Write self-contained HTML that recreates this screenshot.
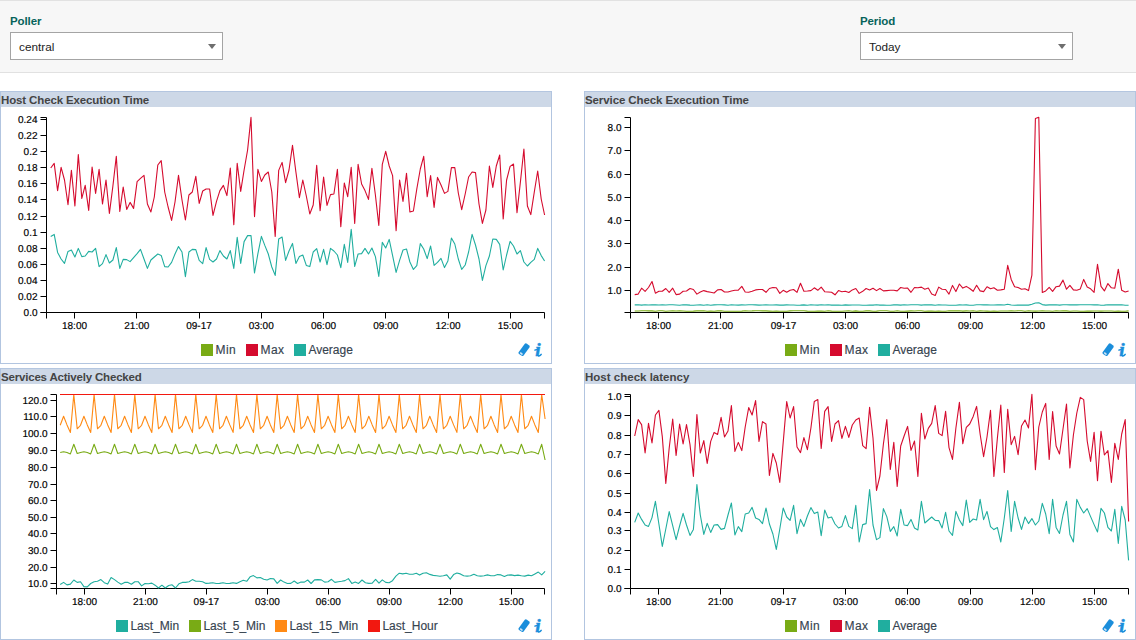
<!DOCTYPE html><html><head><meta charset="utf-8"><title>Poller statistics</title><style>
html,body{margin:0;padding:0;background:#fff;width:1136px;height:640px;overflow:hidden}
body{font-family:"Liberation Sans",sans-serif;position:relative}
.top{position:absolute;left:0;top:0;width:1136px;height:72px;background:#f7f7f7;border-top:1px solid #e2e2e2;border-bottom:1px solid #e1e1e1;box-sizing:content-box;height:71px}
.lbl{position:absolute;font-weight:bold;font-size:11.5px;color:#07635b;line-height:14px;letter-spacing:-0.1px}
.sel{position:absolute;width:211px;height:26px;background:#fff;border:1px solid #a4a4a4;font-size:11.8px;color:#222;line-height:29px;text-indent:8px}
.sel:after{content:"";position:absolute;right:6px;top:11px;border-left:4px solid transparent;border-right:4px solid transparent;border-top:5px solid #6e6e6e}
.panel{position:absolute;border:1px solid #b2c5e0;border-top:none;background:#fff;box-sizing:content-box}
.hd{height:16px;background:#cdd8e7;color:#444;font-weight:bold;font-size:11.5px;line-height:17px;padding-left:0px;white-space:nowrap;border-top:1px solid #b4c6e0;box-sizing:border-box}
svg{display:block}
.ax{fill:none;stroke:#000;stroke-width:1}
.tk{font-size:10px;text-rendering:geometricPrecision;stroke:#000;stroke-width:0.18px;fill:#000;font-family:"Liberation Sans",sans-serif}
.lg{font-size:12px;fill:#36434f;stroke:#36434f;stroke-width:0.15px;font-family:"Liberation Sans",sans-serif}
.ln{fill:none;stroke-width:1.1;stroke-linejoin:round}
.ii{font-family:"Liberation Serif",serif;font-style:italic;font-weight:bold;font-size:19.5px;fill:#1b8edb;stroke:#1b8edb;stroke-width:0.45px}
</style></head><body><div class="top"></div><div class="lbl" style="left:10px;top:14px">Poller</div><div class="sel" style="left:10px;top:32px">central</div><div class="lbl" style="left:860px;top:14px">Period</div><div class="sel" style="left:860px;top:32px">Today</div><div class="panel" style="left:0px;top:91px;width:550px;height:272px"><div class="hd" style="letter-spacing:-0.13px">Host Check Execution Time</div><svg width="550" height="256" viewBox="0 0 550 256"><path d="M39.5,10.5H45.5V205.5H39.5" class="ax"/><line x1="39.5" x2="45.5" y1="205.5" y2="205.5" class="ax"/><text x="36.5" y="208.8" text-anchor="end" class="tk">0.0</text><line x1="39.5" x2="45.5" y1="189.5" y2="189.5" class="ax"/><text x="36.5" y="192.8" text-anchor="end" class="tk">0.02</text><line x1="39.5" x2="45.5" y1="173.5" y2="173.5" class="ax"/><text x="36.5" y="176.8" text-anchor="end" class="tk">0.04</text><line x1="39.5" x2="45.5" y1="157.5" y2="157.5" class="ax"/><text x="36.5" y="160.8" text-anchor="end" class="tk">0.06</text><line x1="39.5" x2="45.5" y1="141.5" y2="141.5" class="ax"/><text x="36.5" y="144.8" text-anchor="end" class="tk">0.08</text><line x1="39.5" x2="45.5" y1="125.5" y2="125.5" class="ax"/><text x="36.5" y="128.8" text-anchor="end" class="tk">0.1</text><line x1="39.5" x2="45.5" y1="109.5" y2="109.5" class="ax"/><text x="36.5" y="112.8" text-anchor="end" class="tk">0.12</text><line x1="39.5" x2="45.5" y1="92.5" y2="92.5" class="ax"/><text x="36.5" y="95.8" text-anchor="end" class="tk">0.14</text><line x1="39.5" x2="45.5" y1="76.5" y2="76.5" class="ax"/><text x="36.5" y="79.8" text-anchor="end" class="tk">0.16</text><line x1="39.5" x2="45.5" y1="60.5" y2="60.5" class="ax"/><text x="36.5" y="63.8" text-anchor="end" class="tk">0.18</text><line x1="39.5" x2="45.5" y1="44.5" y2="44.5" class="ax"/><text x="36.5" y="47.8" text-anchor="end" class="tk">0.2</text><line x1="39.5" x2="45.5" y1="28.5" y2="28.5" class="ax"/><text x="36.5" y="31.8" text-anchor="end" class="tk">0.22</text><line x1="39.5" x2="45.5" y1="12.5" y2="12.5" class="ax"/><text x="36.5" y="15.8" text-anchor="end" class="tk">0.24</text><path d="M45.5,211.5V205.5H543.5V211.5" class="ax"/><line x1="73.5" x2="73.5" y1="205.5" y2="211.5" class="ax"/><text x="73.5" y="222.0" text-anchor="middle" class="tk">18:00</text><line x1="135.5" x2="135.5" y1="205.5" y2="211.5" class="ax"/><text x="135.8" y="222.0" text-anchor="middle" class="tk">21:00</text><line x1="198.5" x2="198.5" y1="205.5" y2="211.5" class="ax"/><text x="198.0" y="222.0" text-anchor="middle" class="tk">09-17</text><line x1="260.5" x2="260.5" y1="205.5" y2="211.5" class="ax"/><text x="260.2" y="222.0" text-anchor="middle" class="tk">03:00</text><line x1="322.5" x2="322.5" y1="205.5" y2="211.5" class="ax"/><text x="322.5" y="222.0" text-anchor="middle" class="tk">06:00</text><line x1="384.5" x2="384.5" y1="205.5" y2="211.5" class="ax"/><text x="384.8" y="222.0" text-anchor="middle" class="tk">09:00</text><line x1="447.5" x2="447.5" y1="205.5" y2="211.5" class="ax"/><text x="447.0" y="222.0" text-anchor="middle" class="tk">12:00</text><line x1="509.5" x2="509.5" y1="205.5" y2="211.5" class="ax"/><text x="509.2" y="222.0" text-anchor="middle" class="tk">15:00</text><path d="M49.7,61.0 L53.2,56.4 L56.6,83.6 L60.1,60.4 L63.5,73.0 L67.0,97.6 L70.4,63.4 L73.9,99.0 L77.3,47.6 L80.8,91.4 L84.2,78.4 L87.7,103.4 L91.1,60.0 L94.6,86.4 L98.1,62.4 L101.5,97.0 L105.0,73.0 L108.4,106.4 L111.9,79.0 L115.3,49.4 L118.8,104.4 L122.2,80.0 L125.7,102.4 L129.1,95.4 L132.6,101.4 L136.1,74.6 L139.5,71.4 L143.0,68.4 L146.4,97.0 L149.9,105.0 L153.3,90.0 L156.8,58.0 L160.2,53.6 L163.7,85.0 L167.1,100.0 L170.6,113.4 L174.0,95.0 L177.5,68.4 L181.0,93.0 L184.4,113.0 L187.9,88.0 L191.3,85.0 L194.8,69.4 L198.2,96.4 L201.7,84.0 L205.1,82.0 L208.6,82.0 L212.0,108.4 L215.5,94.4 L218.9,83.6 L222.4,78.4 L225.9,88.6 L229.3,61.0 L232.8,117.6 L236.2,56.4 L239.7,84.4 L243.1,63.0 L246.6,43.0 L250.0,10.4 L253.5,109.6 L256.9,62.4 L260.4,74.4 L263.8,68.0 L267.3,65.0 L270.8,85.0 L274.2,129.4 L277.7,63.4 L281.1,55.4 L284.6,75.6 L288.0,63.0 L291.5,38.4 L294.9,65.0 L298.4,90.6 L301.8,73.0 L305.3,89.0 L308.8,107.0 L312.2,98.0 L315.7,58.4 L319.1,103.6 L322.6,70.0 L326.0,98.4 L329.5,87.6 L332.9,87.0 L336.4,62.4 L339.8,119.6 L343.3,76.0 L346.7,89.6 L350.2,60.4 L353.7,116.4 L357.1,57.4 L360.6,77.0 L364.0,83.6 L367.5,92.4 L370.9,61.4 L374.4,88.0 L377.8,118.4 L381.3,57.4 L384.7,44.4 L388.2,59.0 L391.6,68.6 L395.1,123.6 L398.6,73.0 L402.0,94.4 L405.5,66.4 L408.9,105.0 L412.4,104.0 L415.8,82.0 L419.3,62.0 L422.7,49.4 L426.2,89.6 L429.6,68.6 L433.1,100.4 L436.5,70.4 L440.0,78.0 L443.5,86.4 L446.9,84.4 L450.4,60.6 L453.8,60.6 L457.3,86.0 L460.7,102.6 L464.2,87.0 L467.6,70.0 L471.1,65.0 L474.5,65.6 L478.0,97.0 L481.4,116.4 L484.9,103.0 L488.4,59.0 L491.8,80.4 L495.3,59.0 L498.7,48.0 L502.2,112.0 L505.6,73.0 L509.1,59.4 L512.5,57.0 L516.0,105.6 L519.4,75.0 L522.9,42.0 L526.4,99.0 L529.8,107.6 L533.3,85.0 L536.7,64.0 L540.2,92.0 L543.6,108.0" class="ln" stroke="#d50b2e"/><path d="M49.7,129.4 L53.2,127.4 L56.6,145.4 L60.1,152.0 L63.5,156.4 L67.0,144.4 L70.4,143.0 L73.9,150.0 L77.3,141.4 L80.8,149.6 L84.2,149.0 L87.7,144.4 L91.1,145.0 L94.6,141.4 L98.1,159.6 L101.5,156.6 L105.0,147.6 L108.4,156.0 L111.9,153.0 L115.3,140.6 L118.8,161.4 L122.2,152.4 L125.7,152.6 L129.1,154.6 L132.6,150.6 L136.1,146.6 L139.5,142.4 L143.0,152.0 L146.4,161.4 L149.9,153.0 L153.3,150.0 L156.8,147.0 L160.2,148.4 L163.7,159.6 L167.1,160.0 L170.6,155.4 L174.0,147.0 L177.5,139.6 L181.0,145.0 L184.4,169.6 L187.9,145.0 L191.3,142.4 L194.8,142.6 L198.2,153.4 L201.7,156.6 L205.1,140.6 L208.6,152.4 L212.0,155.0 L215.5,152.0 L218.9,143.6 L222.4,149.0 L225.9,152.0 L229.3,143.6 L232.8,161.4 L236.2,130.4 L239.7,156.4 L243.1,134.6 L246.6,128.6 L250.0,128.6 L253.5,166.0 L256.9,146.6 L260.4,129.4 L263.8,138.4 L267.3,147.0 L270.8,160.0 L274.2,168.4 L277.7,132.0 L281.1,130.0 L284.6,153.4 L288.0,144.0 L291.5,136.4 L294.9,156.4 L298.4,149.6 L301.8,148.0 L305.3,158.4 L308.8,159.6 L312.2,145.0 L315.7,141.6 L319.1,155.0 L322.6,142.4 L326.0,157.6 L329.5,141.4 L332.9,144.0 L336.4,148.0 L339.8,160.6 L343.3,137.4 L346.7,155.4 L350.2,122.4 L353.7,159.4 L357.1,147.0 L360.6,146.6 L364.0,141.4 L367.5,147.0 L370.9,141.0 L374.4,149.6 L377.8,169.4 L381.3,135.4 L384.7,141.0 L388.2,132.4 L391.6,148.6 L395.1,165.4 L398.6,153.4 L402.0,143.0 L405.5,142.0 L408.9,155.0 L412.4,162.4 L415.8,158.6 L419.3,136.6 L422.7,142.0 L426.2,151.6 L429.6,139.0 L433.1,158.4 L436.5,155.4 L440.0,151.4 L443.5,160.6 L446.9,154.0 L450.4,131.0 L453.8,137.0 L457.3,152.0 L460.7,162.4 L464.2,158.0 L467.6,145.0 L471.1,127.4 L474.5,138.0 L478.0,152.0 L481.4,173.4 L484.9,158.6 L488.4,149.0 L491.8,132.0 L495.3,132.4 L498.7,137.4 L502.2,163.0 L505.6,148.0 L509.1,134.4 L512.5,139.0 L516.0,147.0 L519.4,143.6 L522.9,155.0 L526.4,159.0 L529.8,155.4 L533.3,152.4 L536.7,141.4 L540.2,148.6 L543.6,154.0" class="ln" stroke="#20ae9f"/><rect x="200.0" y="237.0" width="12" height="12" fill="#79ab15"/><text x="214.4" y="246.9" class="lg" style="letter-spacing:0.5px">Min</text><rect x="245.0" y="237.0" width="12" height="12" fill="#d50b2e"/><text x="259.4" y="246.9" class="lg" style="letter-spacing:0.5px">Max</text><rect x="293.0" y="237.0" width="12" height="12" fill="#20ae9f"/><text x="307.4" y="246.9" class="lg">Average</text><g transform="translate(517,236)"><path d="M0.6,9.2 L6.6,0.9 Q7.6,-0.2 8.9,0.7 L11.2,2.4 Q12.2,3.4 11.4,4.6 L5.6,12.4 Q4.6,13.4 3.3,12.6 L1,10.9 Q0,10.1 0.6,9.2 Z" fill="#1b8edb"/><ellipse cx="3.3" cy="10.6" rx="1.7" ry="0.9" transform="rotate(36 3.3 10.6)" fill="#cfe6f7"/>
<text x="17.3" y="13.1" class="ii">i</text><path d="M16.9,7.1L19.6,6.2M20.6,12.9Q22.6,12.6 23.2,11.4" fill="none" stroke="#1b8edb" stroke-width="1.5" stroke-linecap="round"/></g></svg></div><div class="panel" style="left:584px;top:91px;width:550px;height:272px"><div class="hd" style="letter-spacing:-0.1px">Service Check Execution Time</div><svg width="550" height="256" viewBox="0 0 550 256"><path d="M39.5,10.5H45.5V205.5H39.5" class="ax"/><line x1="39.5" x2="45.5" y1="183.5" y2="183.5" class="ax"/><text x="36.5" y="186.8" text-anchor="end" class="tk">1.0</text><line x1="39.5" x2="45.5" y1="160.5" y2="160.5" class="ax"/><text x="36.5" y="163.8" text-anchor="end" class="tk">2.0</text><line x1="39.5" x2="45.5" y1="136.5" y2="136.5" class="ax"/><text x="36.5" y="139.8" text-anchor="end" class="tk">3.0</text><line x1="39.5" x2="45.5" y1="113.5" y2="113.5" class="ax"/><text x="36.5" y="116.8" text-anchor="end" class="tk">4.0</text><line x1="39.5" x2="45.5" y1="90.5" y2="90.5" class="ax"/><text x="36.5" y="93.8" text-anchor="end" class="tk">5.0</text><line x1="39.5" x2="45.5" y1="67.5" y2="67.5" class="ax"/><text x="36.5" y="70.8" text-anchor="end" class="tk">6.0</text><line x1="39.5" x2="45.5" y1="43.5" y2="43.5" class="ax"/><text x="36.5" y="46.8" text-anchor="end" class="tk">7.0</text><line x1="39.5" x2="45.5" y1="20.5" y2="20.5" class="ax"/><text x="36.5" y="23.8" text-anchor="end" class="tk">8.0</text><path d="M45.5,211.5V205.5H543.5V211.5" class="ax"/><line x1="73.5" x2="73.5" y1="205.5" y2="211.5" class="ax"/><text x="73.5" y="222.0" text-anchor="middle" class="tk">18:00</text><line x1="135.5" x2="135.5" y1="205.5" y2="211.5" class="ax"/><text x="135.5" y="222.0" text-anchor="middle" class="tk">21:00</text><line x1="198.5" x2="198.5" y1="205.5" y2="211.5" class="ax"/><text x="198.5" y="222.0" text-anchor="middle" class="tk">09-17</text><line x1="260.5" x2="260.5" y1="205.5" y2="211.5" class="ax"/><text x="260.5" y="222.0" text-anchor="middle" class="tk">03:00</text><line x1="322.5" x2="322.5" y1="205.5" y2="211.5" class="ax"/><text x="322.5" y="222.0" text-anchor="middle" class="tk">06:00</text><line x1="385.5" x2="385.5" y1="205.5" y2="211.5" class="ax"/><text x="385.5" y="222.0" text-anchor="middle" class="tk">09:00</text><line x1="447.5" x2="447.5" y1="205.5" y2="211.5" class="ax"/><text x="447.5" y="222.0" text-anchor="middle" class="tk">12:00</text><line x1="509.5" x2="509.5" y1="205.5" y2="211.5" class="ax"/><text x="509.5" y="222.0" text-anchor="middle" class="tk">15:00</text><path d="M49.7,204.0 L53.2,204.0 L56.6,203.8 L60.1,203.8 L63.5,203.9 L67.0,203.9 L70.4,204.2 L73.9,203.8 L77.3,203.7 L80.8,204.3 L84.2,204.0 L87.7,203.8 L91.1,204.0 L94.6,203.7 L98.1,204.0 L101.5,204.3 L105.0,204.2 L108.4,204.1 L111.9,203.9 L115.3,203.9 L118.8,203.8 L122.2,204.2 L125.7,204.0 L129.1,204.2 L132.6,203.9 L136.1,203.8 L139.5,204.2 L143.0,204.3 L146.4,204.2 L149.9,204.2 L153.3,204.2 L156.8,204.1 L160.2,203.8 L163.7,204.0 L167.1,203.9 L170.6,203.7 L174.0,203.7 L177.5,203.9 L181.0,203.9 L184.4,204.1 L187.9,204.3 L191.3,204.0 L194.8,204.3 L198.2,204.3 L201.7,204.3 L205.1,203.9 L208.6,203.8 L212.0,203.8 L215.5,203.8 L218.9,203.8 L222.4,204.1 L225.9,204.2 L229.3,204.2 L232.8,204.0 L236.2,204.1 L239.7,204.2 L243.1,203.8 L246.6,204.1 L250.0,204.2 L253.5,204.2 L256.9,204.2 L260.4,204.0 L263.8,203.8 L267.3,204.2 L270.8,203.9 L274.2,204.2 L277.7,204.3 L281.1,203.9 L284.6,203.9 L288.0,204.3 L291.5,204.1 L294.9,203.8 L298.4,203.8 L301.8,203.8 L305.3,204.2 L308.8,204.2 L312.2,203.8 L315.7,204.2 L319.1,204.3 L322.6,204.1 L326.0,203.9 L329.5,204.0 L332.9,203.8 L336.4,203.7 L339.8,204.3 L343.3,204.1 L346.7,204.0 L350.2,204.3 L353.7,204.0 L357.1,204.2 L360.6,204.2 L364.0,203.8 L367.5,203.9 L370.9,203.9 L374.4,203.8 L377.8,204.1 L381.3,203.9 L384.7,204.0 L388.2,203.8 L391.6,204.2 L395.1,203.9 L398.6,204.0 L402.0,204.1 L405.5,204.2 L408.9,204.0 L412.4,204.3 L415.8,204.0 L419.3,204.0 L422.7,204.0 L426.2,203.7 L429.6,204.0 L433.1,203.8 L436.5,203.7 L440.0,204.2 L443.5,203.8 L446.9,204.0 L450.4,204.1 L453.8,204.0 L457.3,203.9 L460.7,204.0 L464.2,204.0 L467.6,204.2 L471.1,203.8 L474.5,204.0 L478.0,203.8 L481.5,203.9 L484.9,204.2 L488.4,204.0 L491.8,204.0 L495.3,204.2 L498.7,204.2 L502.2,204.0 L505.6,204.1 L509.1,204.0 L512.5,204.0 L516.0,204.1 L519.4,204.0 L522.9,204.0 L526.4,204.0 L529.8,204.3 L533.3,204.1 L536.7,204.2 L540.2,204.3 L543.6,203.9" class="ln" stroke="#79ab15"/><path d="M49.7,187.6 L53.2,187.1 L56.6,181.2 L60.1,184.3 L63.5,180.5 L67.0,174.5 L70.4,186.2 L73.9,184.3 L77.3,184.3 L80.8,181.5 L84.2,185.3 L87.7,181.2 L91.1,187.6 L94.6,187.1 L98.1,184.3 L101.5,184.0 L105.0,181.5 L108.4,182.5 L111.9,187.1 L115.3,185.0 L118.8,183.6 L122.2,184.6 L125.7,185.3 L129.1,186.0 L132.6,182.9 L136.1,182.5 L139.5,185.0 L143.0,185.0 L146.4,184.0 L149.9,183.3 L153.3,183.2 L156.8,179.4 L160.2,185.0 L163.7,185.3 L167.1,184.3 L170.6,182.9 L174.0,182.5 L177.5,182.5 L181.0,185.3 L184.4,181.5 L187.9,180.5 L191.3,180.8 L194.8,186.4 L198.2,183.3 L201.7,185.3 L205.1,183.3 L208.6,182.5 L212.0,185.3 L215.5,176.3 L218.9,184.3 L222.4,184.0 L225.9,183.6 L229.3,180.8 L232.8,183.3 L236.2,180.1 L239.7,184.7 L243.1,185.0 L246.6,185.3 L250.0,187.8 L253.5,183.6 L256.9,184.7 L260.4,184.3 L263.8,185.5 L267.3,182.9 L270.8,181.5 L274.2,186.4 L277.7,184.3 L281.1,181.5 L284.6,182.9 L288.0,181.2 L291.5,183.6 L294.9,181.5 L298.4,183.9 L301.8,183.6 L305.3,183.3 L308.8,183.2 L312.2,183.9 L315.7,180.5 L319.1,181.2 L322.6,181.1 L326.0,185.3 L329.5,180.5 L332.9,180.8 L336.4,180.1 L339.8,182.2 L343.3,181.1 L346.7,187.1 L350.2,188.5 L353.7,180.1 L357.1,182.2 L360.6,182.5 L364.0,187.1 L367.5,178.4 L370.9,184.6 L374.4,177.0 L377.8,181.1 L381.3,179.4 L384.7,181.5 L388.2,184.3 L391.6,178.3 L395.1,183.9 L398.6,184.6 L402.0,179.7 L405.5,181.8 L408.9,180.8 L412.4,183.2 L415.8,182.9 L419.3,182.2 L422.7,158.3 L426.2,172.4 L429.6,179.8 L433.1,180.5 L436.5,182.2 L440.0,181.8 L443.5,183.6 L446.9,168.1 L450.4,11.4 L453.8,10.2 L457.3,185.5 L460.7,183.9 L464.2,180.4 L467.6,184.3 L471.1,179.7 L474.5,179.1 L478.0,173.1 L481.5,182.2 L484.9,178.3 L488.4,182.9 L491.8,183.2 L495.3,181.9 L498.7,172.4 L502.2,180.1 L505.6,181.8 L509.1,185.3 L512.5,157.3 L516.0,179.4 L519.4,183.9 L522.9,176.6 L526.4,180.8 L529.8,181.2 L533.3,162.2 L536.7,183.3 L540.2,185.0 L543.6,184.0" class="ln" stroke="#d50b2e"/><path d="M49.7,197.9 L53.2,197.8 L56.6,198.1 L60.1,197.8 L63.5,198.0 L67.0,197.9 L70.4,197.8 L73.9,198.0 L77.3,197.8 L80.8,198.0 L84.2,197.8 L87.7,197.8 L91.1,198.0 L94.6,198.2 L98.1,197.8 L101.5,197.9 L105.0,198.1 L108.4,198.2 L111.9,198.0 L115.3,197.9 L118.8,198.2 L122.2,197.8 L125.7,198.2 L129.1,197.9 L132.6,197.8 L136.1,197.8 L139.5,197.9 L143.0,198.2 L146.4,197.8 L149.9,198.0 L153.3,198.1 L156.8,197.9 L160.2,198.0 L163.7,197.8 L167.1,197.8 L170.6,197.9 L174.0,198.1 L177.5,198.0 L181.0,197.9 L184.4,198.0 L187.9,198.0 L191.3,197.9 L194.8,198.1 L198.2,198.1 L201.7,197.9 L205.1,198.0 L208.6,198.0 L212.0,198.2 L215.5,198.1 L218.9,197.9 L222.4,198.2 L225.9,197.8 L229.3,198.0 L232.8,198.1 L236.2,197.8 L239.7,198.0 L243.1,197.8 L246.6,198.1 L250.0,198.1 L253.5,198.0 L256.9,198.2 L260.4,197.9 L263.8,198.1 L267.3,198.0 L270.8,198.0 L274.2,198.0 L277.7,198.2 L281.1,198.2 L284.6,198.0 L288.0,198.1 L291.5,197.8 L294.9,198.1 L298.4,198.1 L301.8,198.2 L305.3,198.2 L308.8,197.9 L312.2,197.9 L315.7,198.1 L319.1,197.8 L322.6,198.0 L326.0,197.8 L329.5,197.8 L332.9,197.8 L336.4,198.1 L339.8,197.8 L343.3,197.9 L346.7,197.9 L350.2,198.2 L353.7,197.8 L357.1,198.0 L360.6,198.0 L364.0,198.2 L367.5,198.2 L370.9,198.2 L374.4,197.9 L377.8,198.0 L381.3,197.9 L384.7,198.2 L388.2,198.2 L391.6,197.8 L395.1,197.8 L398.6,197.9 L402.0,197.9 L405.5,198.0 L408.9,198.0 L412.4,197.9 L415.8,197.8 L419.3,198.0 L422.7,197.2 L426.2,198.0 L429.6,198.2 L433.1,198.1 L436.5,198.0 L440.0,198.1 L443.5,198.1 L446.9,197.3 L450.4,196.0 L453.8,195.8 L457.3,197.6 L460.7,198.1 L464.2,197.9 L467.6,197.9 L471.1,197.8 L474.5,198.1 L478.0,197.8 L481.5,197.8 L484.9,197.9 L488.4,197.8 L491.8,197.9 L495.3,197.8 L498.7,197.8 L502.2,197.8 L505.6,197.8 L509.1,197.9 L512.5,197.8 L516.0,198.2 L519.4,198.1 L522.9,197.8 L526.4,197.9 L529.8,197.9 L533.3,197.9 L536.7,197.8 L540.2,198.2 L543.6,198.2" class="ln" stroke="#20ae9f"/><rect x="200.0" y="237.0" width="12" height="12" fill="#79ab15"/><text x="214.4" y="246.9" class="lg" style="letter-spacing:0.5px">Min</text><rect x="245.0" y="237.0" width="12" height="12" fill="#d50b2e"/><text x="259.4" y="246.9" class="lg" style="letter-spacing:0.5px">Max</text><rect x="293.0" y="237.0" width="12" height="12" fill="#20ae9f"/><text x="307.4" y="246.9" class="lg">Average</text><g transform="translate(517,236)"><path d="M0.6,9.2 L6.6,0.9 Q7.6,-0.2 8.9,0.7 L11.2,2.4 Q12.2,3.4 11.4,4.6 L5.6,12.4 Q4.6,13.4 3.3,12.6 L1,10.9 Q0,10.1 0.6,9.2 Z" fill="#1b8edb"/><ellipse cx="3.3" cy="10.6" rx="1.7" ry="0.9" transform="rotate(36 3.3 10.6)" fill="#cfe6f7"/>
<text x="17.3" y="13.1" class="ii">i</text><path d="M16.9,7.1L19.6,6.2M20.6,12.9Q22.6,12.6 23.2,11.4" fill="none" stroke="#1b8edb" stroke-width="1.5" stroke-linecap="round"/></g></svg></div><div class="panel" style="left:0px;top:368px;width:550px;height:271px"><div class="hd" style="letter-spacing:-0.19px">Services Actively Checked</div><svg width="550" height="255" viewBox="0 0 550 255"><path d="M49.5,10.5H55.5V204.5H49.5" class="ax"/><line x1="49.5" x2="55.5" y1="199.5" y2="199.5" class="ax"/><text x="46.5" y="202.8" text-anchor="end" class="tk">10.0</text><line x1="49.5" x2="55.5" y1="183.5" y2="183.5" class="ax"/><text x="46.5" y="186.8" text-anchor="end" class="tk">20.0</text><line x1="49.5" x2="55.5" y1="166.5" y2="166.5" class="ax"/><text x="46.5" y="169.8" text-anchor="end" class="tk">30.0</text><line x1="49.5" x2="55.5" y1="149.5" y2="149.5" class="ax"/><text x="46.5" y="152.8" text-anchor="end" class="tk">40.0</text><line x1="49.5" x2="55.5" y1="133.5" y2="133.5" class="ax"/><text x="46.5" y="136.8" text-anchor="end" class="tk">50.0</text><line x1="49.5" x2="55.5" y1="116.5" y2="116.5" class="ax"/><text x="46.5" y="119.8" text-anchor="end" class="tk">60.0</text><line x1="49.5" x2="55.5" y1="100.5" y2="100.5" class="ax"/><text x="46.5" y="103.8" text-anchor="end" class="tk">70.0</text><line x1="49.5" x2="55.5" y1="83.5" y2="83.5" class="ax"/><text x="46.5" y="86.8" text-anchor="end" class="tk">80.0</text><line x1="49.5" x2="55.5" y1="66.5" y2="66.5" class="ax"/><text x="46.5" y="69.8" text-anchor="end" class="tk">90.0</text><line x1="49.5" x2="55.5" y1="49.5" y2="49.5" class="ax"/><text x="46.5" y="52.8" text-anchor="end" class="tk">100.0</text><line x1="49.5" x2="55.5" y1="32.5" y2="32.5" class="ax"/><text x="46.5" y="35.8" text-anchor="end" class="tk">110.0</text><line x1="49.5" x2="55.5" y1="16.5" y2="16.5" class="ax"/><text x="46.5" y="19.8" text-anchor="end" class="tk">120.0</text><path d="M55.5,210.5V204.5H543.5V210.5" class="ax"/><line x1="83.5" x2="83.5" y1="204.5" y2="210.5" class="ax"/><text x="83.5" y="221.0" text-anchor="middle" class="tk">18:00</text><line x1="144.5" x2="144.5" y1="204.5" y2="210.5" class="ax"/><text x="144.4" y="221.0" text-anchor="middle" class="tk">21:00</text><line x1="205.5" x2="205.5" y1="204.5" y2="210.5" class="ax"/><text x="205.4" y="221.0" text-anchor="middle" class="tk">09-17</text><line x1="266.5" x2="266.5" y1="204.5" y2="210.5" class="ax"/><text x="266.4" y="221.0" text-anchor="middle" class="tk">03:00</text><line x1="327.5" x2="327.5" y1="204.5" y2="210.5" class="ax"/><text x="327.3" y="221.0" text-anchor="middle" class="tk">06:00</text><line x1="388.5" x2="388.5" y1="204.5" y2="210.5" class="ax"/><text x="388.2" y="221.0" text-anchor="middle" class="tk">09:00</text><line x1="449.5" x2="449.5" y1="204.5" y2="210.5" class="ax"/><text x="449.2" y="221.0" text-anchor="middle" class="tk">12:00</text><line x1="510.5" x2="510.5" y1="204.5" y2="210.5" class="ax"/><text x="510.2" y="221.0" text-anchor="middle" class="tk">15:00</text><path d="M59.2,200.5 L62.6,198.4 L66.0,200.9 L69.4,200.1 L72.8,196.0 L76.2,198.4 L79.5,197.7 L82.9,202.6 L86.3,202.9 L89.7,199.5 L93.1,197.7 L96.5,197.3 L99.9,195.6 L103.3,198.7 L106.7,200.1 L110.1,193.5 L113.5,195.6 L116.8,198.1 L120.2,200.2 L123.6,198.4 L127.0,198.4 L130.4,200.2 L133.8,197.7 L137.2,197.7 L140.6,201.9 L144.0,199.5 L147.4,199.8 L150.8,199.1 L154.1,201.2 L157.5,204.0 L160.9,201.2 L164.3,204.0 L167.7,201.5 L171.1,200.8 L174.5,204.0 L177.9,199.8 L181.3,198.4 L184.7,198.4 L188.1,197.7 L191.4,195.6 L194.8,197.3 L198.2,197.3 L201.6,197.7 L205.0,199.4 L208.4,199.1 L211.8,198.7 L215.2,199.5 L218.6,199.4 L222.0,198.7 L225.4,199.5 L228.8,199.4 L232.1,198.7 L235.5,199.4 L238.9,197.7 L242.3,196.3 L245.7,197.3 L249.1,192.8 L252.5,191.6 L255.9,193.9 L259.3,193.5 L262.7,195.2 L266.1,196.0 L269.4,194.5 L272.8,194.9 L276.2,199.4 L279.6,196.0 L283.0,198.1 L286.4,199.5 L289.8,199.4 L293.2,197.0 L296.6,199.5 L300.0,198.1 L303.4,198.1 L306.7,196.0 L310.1,199.5 L313.5,195.9 L316.9,195.6 L320.3,195.9 L323.7,198.1 L327.1,197.7 L330.5,195.3 L333.9,198.4 L337.3,197.7 L340.7,197.3 L344.0,196.6 L347.4,194.6 L350.8,199.4 L354.2,198.1 L357.6,199.4 L361.0,196.0 L364.4,198.7 L367.8,199.4 L371.2,199.1 L374.6,195.3 L378.0,199.1 L381.3,195.9 L384.7,198.4 L388.1,198.7 L391.5,196.7 L394.9,192.1 L398.3,189.2 L401.7,189.9 L405.1,189.2 L408.5,190.2 L411.9,190.2 L415.3,189.2 L418.6,191.1 L422.0,189.2 L425.4,188.8 L428.8,190.4 L432.2,191.4 L435.6,191.8 L439.0,192.3 L442.4,191.8 L445.8,190.9 L449.2,195.2 L452.6,190.6 L455.9,189.0 L459.3,189.9 L462.7,191.8 L466.1,192.1 L469.5,191.8 L472.9,190.2 L476.3,191.8 L479.7,192.1 L483.1,191.8 L486.5,190.9 L489.9,191.8 L493.2,191.8 L496.6,190.6 L500.0,190.9 L503.4,192.5 L506.8,191.1 L510.2,190.9 L513.6,191.6 L517.0,191.1 L520.4,191.8 L523.8,192.1 L527.2,191.1 L530.5,191.8 L533.9,189.9 L537.3,188.1 L540.7,190.9 L544.1,187.4" class="ln" stroke="#20ae9f"/><path d="M59.2,68.5 L62.6,67.7 L66.0,68.5 L69.4,69.9 L72.8,60.3 L76.2,69.5 L79.5,68.5 L82.9,67.7 L86.3,68.5 L89.7,69.9 L93.1,60.3 L96.5,69.5 L99.9,68.5 L103.3,67.7 L106.7,68.5 L110.1,69.9 L113.5,60.3 L116.8,69.5 L120.2,68.5 L123.6,67.7 L127.0,68.5 L130.4,69.9 L133.8,60.3 L137.2,69.5 L140.6,68.5 L144.0,67.7 L147.4,68.5 L150.8,69.9 L154.1,60.3 L157.5,69.5 L160.9,68.5 L164.3,67.7 L167.7,68.5 L171.1,69.9 L174.5,60.3 L177.9,69.5 L181.3,68.5 L184.7,67.7 L188.1,68.5 L191.4,69.9 L194.8,60.3 L198.2,69.5 L201.6,68.5 L205.0,67.7 L208.4,68.5 L211.8,69.9 L215.2,60.3 L218.6,69.5 L222.0,68.5 L225.4,67.7 L228.8,68.5 L232.1,69.9 L235.5,60.3 L238.9,69.5 L242.3,68.5 L245.7,67.7 L249.1,68.5 L252.5,69.9 L255.9,60.3 L259.3,69.5 L262.7,68.5 L266.1,67.7 L269.4,68.5 L272.8,69.9 L276.2,60.3 L279.6,69.5 L283.0,68.5 L286.4,67.7 L289.8,68.5 L293.2,69.9 L296.6,60.3 L300.0,69.5 L303.4,68.5 L306.7,67.7 L310.1,68.5 L313.5,69.9 L316.9,60.3 L320.3,69.5 L323.7,68.5 L327.1,67.7 L330.5,68.5 L333.9,69.9 L337.3,60.3 L340.7,69.5 L344.0,68.5 L347.4,67.7 L350.8,68.5 L354.2,69.9 L357.6,60.3 L361.0,69.5 L364.4,68.5 L367.8,67.7 L371.2,68.5 L374.6,69.9 L378.0,60.3 L381.3,69.5 L384.7,68.5 L388.1,67.7 L391.5,68.5 L394.9,69.9 L398.3,60.3 L401.7,69.5 L405.1,68.5 L408.5,67.7 L411.9,68.5 L415.3,69.9 L418.6,60.3 L422.0,69.5 L425.4,68.5 L428.8,67.7 L432.2,68.5 L435.6,69.9 L439.0,60.3 L442.4,69.5 L445.8,68.5 L449.2,67.7 L452.6,68.5 L455.9,69.9 L459.3,60.3 L462.7,69.5 L466.1,68.5 L469.5,67.7 L472.9,68.5 L476.3,69.9 L479.7,60.3 L483.1,69.5 L486.5,68.5 L489.9,67.7 L493.2,68.5 L496.6,69.9 L500.0,60.3 L503.4,69.5 L506.8,68.5 L510.2,67.7 L513.6,68.5 L517.0,69.9 L520.4,60.3 L523.8,69.5 L527.2,68.5 L530.5,67.7 L533.9,68.5 L537.3,69.9 L540.7,60.3 L544.1,76.0" class="ln" stroke="#79ab15"/><path d="M59.2,41.3 L62.6,32.2 L66.0,40.9 L69.4,48.4 L72.8,10.6 L76.2,44.8 L79.5,41.3 L82.9,32.2 L86.3,40.9 L89.7,48.4 L93.1,10.6 L96.5,44.8 L99.9,41.3 L103.3,32.2 L106.7,40.9 L110.1,48.4 L113.5,10.6 L116.8,44.8 L120.2,41.3 L123.6,32.2 L127.0,40.9 L130.4,48.4 L133.8,10.6 L137.2,44.8 L140.6,41.3 L144.0,32.2 L147.4,40.9 L150.8,48.4 L154.1,10.6 L157.5,44.8 L160.9,41.3 L164.3,32.2 L167.7,40.9 L171.1,48.4 L174.5,10.6 L177.9,44.8 L181.3,41.3 L184.7,32.2 L188.1,40.9 L191.4,48.4 L194.8,10.6 L198.2,44.8 L201.6,41.3 L205.0,32.2 L208.4,40.9 L211.8,48.4 L215.2,10.6 L218.6,44.8 L222.0,41.3 L225.4,32.2 L228.8,40.9 L232.1,48.4 L235.5,10.6 L238.9,44.8 L242.3,41.3 L245.7,32.2 L249.1,40.9 L252.5,48.4 L255.9,10.6 L259.3,44.8 L262.7,41.3 L266.1,32.2 L269.4,40.9 L272.8,48.4 L276.2,10.6 L279.6,44.8 L283.0,41.3 L286.4,32.2 L289.8,40.9 L293.2,48.4 L296.6,10.6 L300.0,44.8 L303.4,41.3 L306.7,32.2 L310.1,40.9 L313.5,48.4 L316.9,10.6 L320.3,44.8 L323.7,41.3 L327.1,32.2 L330.5,40.9 L333.9,48.4 L337.3,10.6 L340.7,44.8 L344.0,41.3 L347.4,32.2 L350.8,40.9 L354.2,48.4 L357.6,10.6 L361.0,44.8 L364.4,41.3 L367.8,32.2 L371.2,40.9 L374.6,48.4 L378.0,10.6 L381.3,44.8 L384.7,41.3 L388.1,32.2 L391.5,40.9 L394.9,48.4 L398.3,10.6 L401.7,44.8 L405.1,41.3 L408.5,32.2 L411.9,40.9 L415.3,48.4 L418.6,10.6 L422.0,44.8 L425.4,41.3 L428.8,32.2 L432.2,40.9 L435.6,48.4 L439.0,10.6 L442.4,44.8 L445.8,41.3 L449.2,32.2 L452.6,40.9 L455.9,48.4 L459.3,10.6 L462.7,44.8 L466.1,41.3 L469.5,32.2 L472.9,40.9 L476.3,48.4 L479.7,10.6 L483.1,44.8 L486.5,41.3 L489.9,32.2 L493.2,40.9 L496.6,48.4 L500.0,10.6 L503.4,44.8 L506.8,41.3 L510.2,32.2 L513.6,40.9 L517.0,48.4 L520.4,10.6 L523.8,44.8 L527.2,41.3 L530.5,32.2 L533.9,40.9 L537.3,48.4 L540.7,10.6 L544.1,35.0" class="ln" stroke="#ff8a14"/><path d="M59.2,10.5 L62.6,10.5 L66.0,10.5 L69.4,10.5 L72.8,10.5 L76.2,10.5 L79.5,10.5 L82.9,10.5 L86.3,10.5 L89.7,10.5 L93.1,10.5 L96.5,10.5 L99.9,10.5 L103.3,10.5 L106.7,10.5 L110.1,10.5 L113.5,10.5 L116.8,10.5 L120.2,10.5 L123.6,10.5 L127.0,10.5 L130.4,10.5 L133.8,10.5 L137.2,10.5 L140.6,10.5 L144.0,10.5 L147.4,10.5 L150.8,10.5 L154.1,10.5 L157.5,10.5 L160.9,10.5 L164.3,10.5 L167.7,10.5 L171.1,10.5 L174.5,10.5 L177.9,10.5 L181.3,10.5 L184.7,10.5 L188.1,10.5 L191.4,10.5 L194.8,10.5 L198.2,10.5 L201.6,10.5 L205.0,10.5 L208.4,10.5 L211.8,10.5 L215.2,10.5 L218.6,10.5 L222.0,10.5 L225.4,10.5 L228.8,10.5 L232.1,10.5 L235.5,10.5 L238.9,10.5 L242.3,10.5 L245.7,10.5 L249.1,10.5 L252.5,10.5 L255.9,10.5 L259.3,10.5 L262.7,10.5 L266.1,10.5 L269.4,10.5 L272.8,10.5 L276.2,10.5 L279.6,10.5 L283.0,10.5 L286.4,10.5 L289.8,10.5 L293.2,10.5 L296.6,10.5 L300.0,10.5 L303.4,10.5 L306.7,10.5 L310.1,10.5 L313.5,10.5 L316.9,10.5 L320.3,10.5 L323.7,10.5 L327.1,10.5 L330.5,10.5 L333.9,10.5 L337.3,10.5 L340.7,10.5 L344.0,10.5 L347.4,10.5 L350.8,10.5 L354.2,10.5 L357.6,10.5 L361.0,10.5 L364.4,10.5 L367.8,10.5 L371.2,10.5 L374.6,10.5 L378.0,10.5 L381.3,10.5 L384.7,10.5 L388.1,10.5 L391.5,10.5 L394.9,10.5 L398.3,10.5 L401.7,10.5 L405.1,10.5 L408.5,10.5 L411.9,10.5 L415.3,10.5 L418.6,10.5 L422.0,10.5 L425.4,10.5 L428.8,10.5 L432.2,10.5 L435.6,10.5 L439.0,10.5 L442.4,10.5 L445.8,10.5 L449.2,10.5 L452.6,10.5 L455.9,10.5 L459.3,10.5 L462.7,10.5 L466.1,10.5 L469.5,10.5 L472.9,10.5 L476.3,10.5 L479.7,10.5 L483.1,10.5 L486.5,10.5 L489.9,10.5 L493.2,10.5 L496.6,10.5 L500.0,10.5 L503.4,10.5 L506.8,10.5 L510.2,10.5 L513.6,10.5 L517.0,10.5 L520.4,10.5 L523.8,10.5 L527.2,10.5 L530.5,10.5 L533.9,10.5 L537.3,10.5 L540.7,10.5 L544.1,10.5" class="ln" style="stroke-width:1" shape-rendering="crispEdges" stroke="#f21810"/><rect x="115.0" y="236.0" width="12" height="12" fill="#20ae9f"/><text x="129.4" y="245.9" class="lg">Last_Min</text><rect x="188.0" y="236.0" width="12" height="12" fill="#79ab15"/><text x="202.4" y="245.9" class="lg">Last_5_Min</text><rect x="274.0" y="236.0" width="12" height="12" fill="#ff8a14"/><text x="288.4" y="245.9" class="lg">Last_15_Min</text><rect x="367.0" y="236.0" width="12" height="12" fill="#f21810"/><text x="381.4" y="245.9" class="lg">Last_Hour</text><g transform="translate(517,235)"><path d="M0.6,9.2 L6.6,0.9 Q7.6,-0.2 8.9,0.7 L11.2,2.4 Q12.2,3.4 11.4,4.6 L5.6,12.4 Q4.6,13.4 3.3,12.6 L1,10.9 Q0,10.1 0.6,9.2 Z" fill="#1b8edb"/><ellipse cx="3.3" cy="10.6" rx="1.7" ry="0.9" transform="rotate(36 3.3 10.6)" fill="#cfe6f7"/>
<text x="17.3" y="13.1" class="ii">i</text><path d="M16.9,7.1L19.6,6.2M20.6,12.9Q22.6,12.6 23.2,11.4" fill="none" stroke="#1b8edb" stroke-width="1.5" stroke-linecap="round"/></g></svg></div><div class="panel" style="left:584px;top:368px;width:550px;height:271px"><div class="hd" style="letter-spacing:0.01px">Host check latency</div><svg width="550" height="255" viewBox="0 0 550 255"><path d="M39.5,10.5H45.5V204.5H39.5" class="ax"/><line x1="39.5" x2="45.5" y1="204.5" y2="204.5" class="ax"/><text x="36.5" y="207.8" text-anchor="end" class="tk">0.0</text><line x1="39.5" x2="45.5" y1="185.5" y2="185.5" class="ax"/><text x="36.5" y="188.8" text-anchor="end" class="tk">0.1</text><line x1="39.5" x2="45.5" y1="166.5" y2="166.5" class="ax"/><text x="36.5" y="169.8" text-anchor="end" class="tk">0.2</text><line x1="39.5" x2="45.5" y1="146.5" y2="146.5" class="ax"/><text x="36.5" y="149.8" text-anchor="end" class="tk">0.3</text><line x1="39.5" x2="45.5" y1="128.5" y2="128.5" class="ax"/><text x="36.5" y="131.8" text-anchor="end" class="tk">0.4</text><line x1="39.5" x2="45.5" y1="109.5" y2="109.5" class="ax"/><text x="36.5" y="112.8" text-anchor="end" class="tk">0.5</text><line x1="39.5" x2="45.5" y1="89.5" y2="89.5" class="ax"/><text x="36.5" y="92.8" text-anchor="end" class="tk">0.6</text><line x1="39.5" x2="45.5" y1="70.5" y2="70.5" class="ax"/><text x="36.5" y="73.8" text-anchor="end" class="tk">0.7</text><line x1="39.5" x2="45.5" y1="51.5" y2="51.5" class="ax"/><text x="36.5" y="54.8" text-anchor="end" class="tk">0.8</text><line x1="39.5" x2="45.5" y1="31.5" y2="31.5" class="ax"/><text x="36.5" y="34.8" text-anchor="end" class="tk">0.9</text><line x1="39.5" x2="45.5" y1="12.5" y2="12.5" class="ax"/><text x="36.5" y="15.8" text-anchor="end" class="tk">1.0</text><path d="M45.5,210.5V204.5H543.5V210.5" class="ax"/><line x1="73.5" x2="73.5" y1="204.5" y2="210.5" class="ax"/><text x="73.5" y="221.0" text-anchor="middle" class="tk">18:00</text><line x1="135.5" x2="135.5" y1="204.5" y2="210.5" class="ax"/><text x="135.5" y="221.0" text-anchor="middle" class="tk">21:00</text><line x1="198.5" x2="198.5" y1="204.5" y2="210.5" class="ax"/><text x="198.5" y="221.0" text-anchor="middle" class="tk">09-17</text><line x1="260.5" x2="260.5" y1="204.5" y2="210.5" class="ax"/><text x="260.5" y="221.0" text-anchor="middle" class="tk">03:00</text><line x1="322.5" x2="322.5" y1="204.5" y2="210.5" class="ax"/><text x="322.5" y="221.0" text-anchor="middle" class="tk">06:00</text><line x1="385.5" x2="385.5" y1="204.5" y2="210.5" class="ax"/><text x="385.5" y="221.0" text-anchor="middle" class="tk">09:00</text><line x1="447.5" x2="447.5" y1="204.5" y2="210.5" class="ax"/><text x="447.5" y="221.0" text-anchor="middle" class="tk">12:00</text><line x1="509.5" x2="509.5" y1="204.5" y2="210.5" class="ax"/><text x="509.5" y="221.0" text-anchor="middle" class="tk">15:00</text><path d="M49.7,52.0 L53.2,35.6 L56.6,40.6 L60.1,69.0 L63.5,39.4 L67.0,59.0 L70.4,31.0 L73.9,26.4 L77.3,52.6 L80.8,99.4 L84.2,64.0 L87.7,35.0 L91.1,71.4 L94.6,40.0 L98.1,60.0 L101.5,40.6 L105.0,60.6 L108.4,92.4 L111.9,30.6 L115.3,69.0 L118.8,56.6 L122.2,79.4 L125.7,57.4 L129.1,48.4 L132.6,50.4 L136.1,33.4 L139.5,53.0 L143.0,47.0 L146.4,21.6 L149.9,67.4 L153.3,58.4 L156.8,66.6 L160.2,43.0 L163.7,23.6 L167.1,31.0 L170.6,16.6 L174.0,57.4 L177.5,37.6 L181.0,40.0 L184.4,91.4 L187.9,69.4 L191.3,79.0 L194.8,98.4 L198.2,58.4 L201.7,17.6 L205.1,34.0 L208.6,22.6 L212.0,63.0 L215.5,68.6 L218.9,53.6 L222.4,65.6 L225.9,44.0 L229.3,17.4 L232.8,15.6 L236.2,64.4 L239.7,27.4 L243.1,22.6 L246.6,57.4 L250.0,40.0 L253.5,36.6 L256.9,54.4 L260.4,42.4 L263.8,53.4 L267.3,41.0 L270.8,36.0 L274.2,34.0 L277.7,61.6 L281.1,64.6 L284.6,23.4 L288.0,54.0 L291.5,106.4 L294.9,92.0 L298.4,60.0 L301.8,35.6 L305.3,85.4 L308.8,58.4 L312.2,102.4 L315.7,62.0 L319.1,52.0 L322.6,42.4 L326.0,66.4 L329.5,57.0 L332.9,92.4 L336.4,29.4 L339.8,55.0 L343.3,44.4 L346.7,39.4 L350.2,21.6 L353.7,49.4 L357.1,51.6 L360.6,27.4 L364.0,63.6 L367.5,75.4 L370.9,44.0 L374.4,18.4 L377.8,59.6 L381.3,43.4 L384.7,40.0 L388.2,32.4 L391.6,22.4 L395.1,50.0 L398.6,72.6 L402.0,53.0 L405.5,26.4 L408.9,92.4 L412.4,54.0 L415.8,21.0 L419.3,88.4 L422.7,25.4 L426.2,60.6 L429.6,52.4 L433.1,70.6 L436.5,42.0 L440.0,36.0 L443.5,44.0 L446.9,10.4 L450.4,85.6 L453.8,43.0 L457.3,28.0 L460.7,19.4 L464.2,75.4 L467.6,27.6 L471.1,62.0 L474.5,70.0 L478.0,45.0 L481.5,20.0 L484.9,84.0 L488.4,51.0 L491.8,29.0 L495.3,13.4 L498.7,15.6 L502.2,57.0 L505.6,77.4 L509.1,48.4 L512.5,96.6 L516.0,47.4 L519.4,71.0 L522.9,66.6 L526.4,98.4 L529.8,59.4 L533.3,75.4 L536.7,50.0 L540.2,35.6 L543.6,137.6" class="ln" stroke="#d50b2e"/><path d="M49.7,138.4 L53.2,129.0 L56.6,135.4 L60.1,141.0 L63.5,142.4 L67.0,133.6 L70.4,117.4 L73.9,140.0 L77.3,162.4 L80.8,145.0 L84.2,127.6 L87.7,141.6 L91.1,155.6 L94.6,142.0 L98.1,129.4 L101.5,141.0 L105.0,151.4 L108.4,145.4 L111.9,100.6 L115.3,131.0 L118.8,150.4 L122.2,139.4 L125.7,148.4 L129.1,141.0 L132.6,140.6 L136.1,145.4 L139.5,144.4 L143.0,131.0 L146.4,119.0 L149.9,151.0 L153.3,142.6 L156.8,147.6 L160.2,130.0 L163.7,129.0 L167.1,123.4 L170.6,134.0 L174.0,135.4 L177.5,139.6 L181.0,124.0 L184.4,140.0 L187.9,150.0 L191.3,165.4 L194.8,145.0 L198.2,124.0 L201.7,133.0 L205.1,136.4 L208.6,121.4 L212.0,149.6 L215.5,135.4 L218.9,142.4 L222.4,132.0 L225.9,123.6 L229.3,129.6 L232.8,128.0 L236.2,151.6 L239.7,126.0 L243.1,134.0 L246.6,133.0 L250.0,140.0 L253.5,144.0 L256.9,142.4 L260.4,131.6 L263.8,142.4 L267.3,144.6 L270.8,121.4 L274.2,158.0 L277.7,140.6 L281.1,139.6 L284.6,105.6 L288.0,141.0 L291.5,155.6 L294.9,153.6 L298.4,124.6 L301.8,132.6 L305.3,147.4 L308.8,142.6 L312.2,152.0 L315.7,125.4 L319.1,141.0 L322.6,141.6 L326.0,135.4 L329.5,144.0 L332.9,146.0 L336.4,117.4 L339.8,139.0 L343.3,136.0 L346.7,133.0 L350.2,136.4 L353.7,136.6 L357.1,144.0 L360.6,128.4 L364.0,147.0 L367.5,151.4 L370.9,127.4 L374.4,136.0 L377.8,141.6 L381.3,116.0 L384.7,138.4 L388.2,135.0 L391.6,136.0 L395.1,115.4 L398.6,135.6 L402.0,127.4 L405.5,142.6 L408.9,145.6 L412.4,143.6 L415.8,158.0 L419.3,134.0 L422.7,106.6 L426.2,147.4 L429.6,117.4 L433.1,134.0 L436.5,145.4 L440.0,133.0 L443.5,139.6 L446.9,134.6 L450.4,141.0 L453.8,137.0 L457.3,119.4 L460.7,130.0 L464.2,149.6 L467.6,115.4 L471.1,143.4 L474.5,149.4 L478.0,131.0 L481.5,117.4 L484.9,150.4 L488.4,158.0 L491.8,115.4 L495.3,123.4 L498.7,129.0 L502.2,124.6 L505.6,132.6 L509.1,140.6 L512.5,148.0 L516.0,124.4 L519.4,129.0 L522.9,143.4 L526.4,147.0 L529.8,125.4 L533.3,159.4 L536.7,122.4 L540.2,136.0 L543.6,176.4" class="ln" stroke="#20ae9f"/><rect x="200.0" y="236.0" width="12" height="12" fill="#79ab15"/><text x="214.4" y="245.9" class="lg" style="letter-spacing:0.5px">Min</text><rect x="245.0" y="236.0" width="12" height="12" fill="#d50b2e"/><text x="259.4" y="245.9" class="lg" style="letter-spacing:0.5px">Max</text><rect x="293.0" y="236.0" width="12" height="12" fill="#20ae9f"/><text x="307.4" y="245.9" class="lg">Average</text><g transform="translate(517,235)"><path d="M0.6,9.2 L6.6,0.9 Q7.6,-0.2 8.9,0.7 L11.2,2.4 Q12.2,3.4 11.4,4.6 L5.6,12.4 Q4.6,13.4 3.3,12.6 L1,10.9 Q0,10.1 0.6,9.2 Z" fill="#1b8edb"/><ellipse cx="3.3" cy="10.6" rx="1.7" ry="0.9" transform="rotate(36 3.3 10.6)" fill="#cfe6f7"/>
<text x="17.3" y="13.1" class="ii">i</text><path d="M16.9,7.1L19.6,6.2M20.6,12.9Q22.6,12.6 23.2,11.4" fill="none" stroke="#1b8edb" stroke-width="1.5" stroke-linecap="round"/></g></svg></div></body></html>
